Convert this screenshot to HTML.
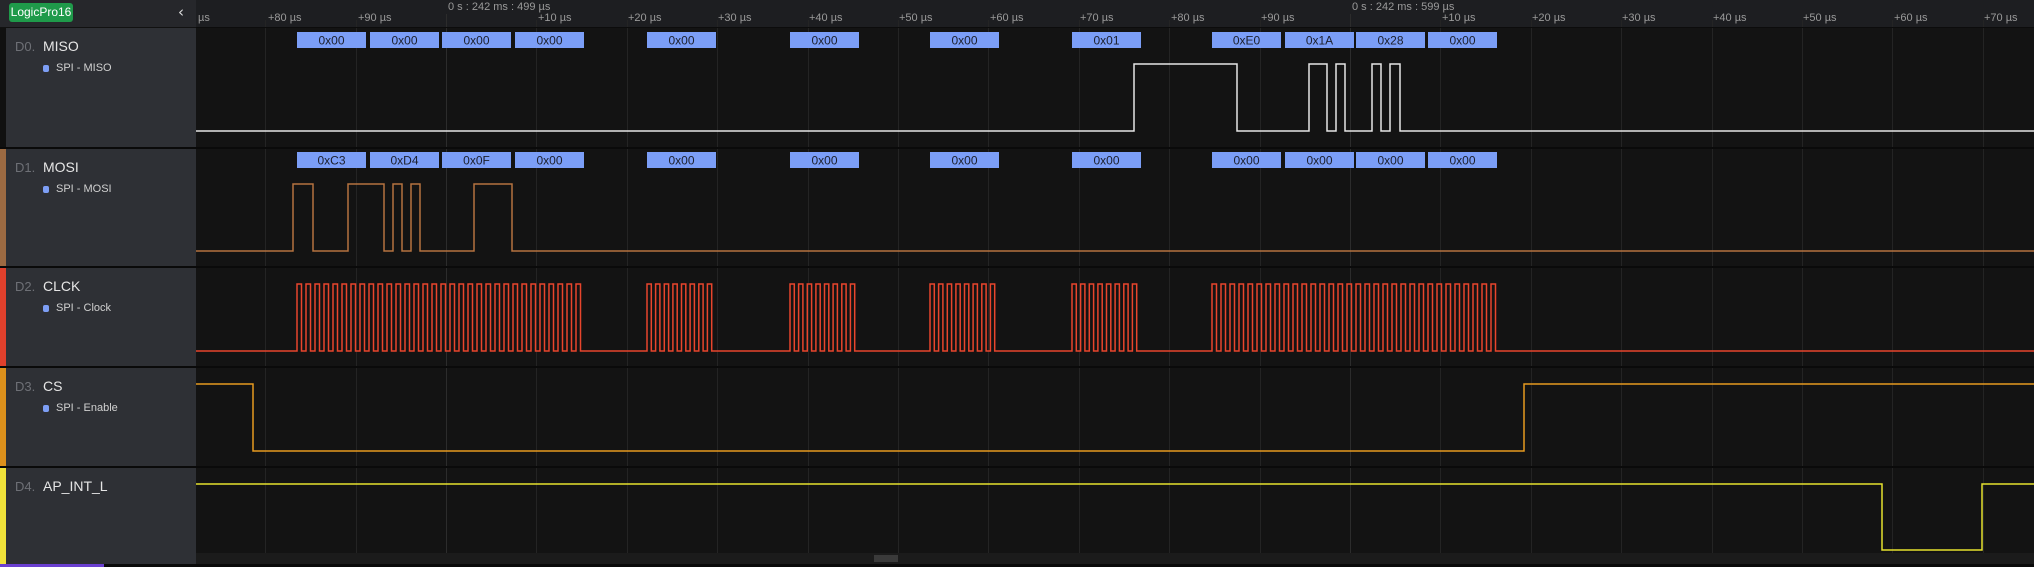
<!DOCTYPE html>
<html><head><meta charset="utf-8">
<style>
html,body{margin:0;padding:0;width:2034px;height:567px;overflow:hidden;background:#131313;font-family:"Liberation Sans Narrow","Liberation Sans",sans-serif;}
#root{position:relative;width:2034px;height:567px;}
.panel{position:absolute;left:0;top:0;width:196px;height:567px;background:#2e3035;}
.hdrL{position:absolute;left:0;top:0;width:196px;height:27px;background:#26272b;border-bottom:1px solid #111;}
.logo{position:absolute;left:9px;top:3px;width:64px;height:19px;background:#1f9a4a;border-radius:3px;color:#fff;font-size:12px;line-height:19px;text-align:center;}
.chev{position:absolute;left:178px;top:3px;color:#ddd;font-size:15px;font-family:"DejaVu Sans",sans-serif;}
.row{position:absolute;left:0;width:196px;}
.strip{position:absolute;left:0;top:0;bottom:0;width:6px;}
.dn{position:absolute;left:15px;top:11px;color:#6e7076;font-size:13px;}
.nm{position:absolute;left:43px;top:10px;color:#e6e6e6;font-size:14px;}
.sub{position:absolute;left:56px;top:34px;color:#d0d0d0;font-size:11px;}
.dot{position:absolute;left:43px;top:37px;width:6px;height:7px;background:#7d9ef5;border-radius:2px;}
.sep{position:absolute;left:0;width:2034px;height:2px;background:#0a0a0a;}
</style></head><body><div id="root">
<svg id="wave" width="2034" height="567" style="position:absolute;left:0;top:0" xmlns="http://www.w3.org/2000/svg">
<rect x="196" y="0" width="1838" height="27" fill="#1d1e21"/>
<rect x="196" y="553" width="1838" height="11" fill="#1b1b1b"/>
<rect x="874" y="555" width="24" height="7" fill="#3a3a3a"/>
<g id="grid"></g>
<g font-size="11" fill="#9a9a9a" id="labels">
<text x="198" y="21">µs</text>
<text x="268" y="21">+80 µs</text>
<text x="358" y="21">+90 µs</text>
<text x="448" y="10">0 s : 242 ms : 499 µs</text>
<text x="538" y="21">+10 µs</text>
<text x="628" y="21">+20 µs</text>
<text x="718" y="21">+30 µs</text>
<text x="809" y="21">+40 µs</text>
<text x="899" y="21">+50 µs</text>
<text x="990" y="21">+60 µs</text>
<text x="1080" y="21">+70 µs</text>
<text x="1171" y="21">+80 µs</text>
<text x="1261" y="21">+90 µs</text>
<text x="1352" y="10">0 s : 242 ms : 599 µs</text>
<text x="1442" y="21">+10 µs</text>
<text x="1532" y="21">+20 µs</text>
<text x="1622" y="21">+30 µs</text>
<text x="1713" y="21">+40 µs</text>
<text x="1803" y="21">+50 µs</text>
<text x="1894" y="21">+60 µs</text>
<text x="1984" y="21">+70 µs</text>
</g>
<path fill="none" stroke="#e6e6e6" stroke-width="1.5" d="M196 131H1134V64H1237V131H1309V64H1327V131H1336V64H1345V131H1372V64H1381V131H1390V64H1400V131H2034"/>
<path fill="none" stroke="#b5733f" stroke-width="1.5" d="M196 251H293V184H313V251H348V184H384V251H393V184H402V251H411V184H420V251H474V184H512V251H2034"/>
<path id="clk" fill="none" stroke="#e8452c" stroke-width="1.5" d=""/>
<path fill="none" stroke="#e69a20" stroke-width="1.5" d="M196 384H253V451H1524V384H2034"/>
<path fill="none" stroke="#e6e22e" stroke-width="1.5" d="M196 484H1882V550H1982V484H2034"/>
<g id="boxes" font-size="12" fill="#1c1f2c" text-anchor="middle"></g>
</svg>
<div class="sep" style="top:27px;background:#0c0c0c;height:1px"></div>
<div class="panel">
<div class="hdrL"><div class="logo">LogicPro16</div><div class="chev">‹</div></div>
<div class="row" style="top:28px;height:119px"><div class="strip" style="background:#101010"></div><div class="dn">D0.</div><div class="nm">MISO</div><div class="dot"></div><div class="sub">SPI - MISO</div></div>
<div class="row" style="top:149px;height:117px"><div class="strip" style="background:#9c6a42"></div><div class="dn">D1.</div><div class="nm">MOSI</div><div class="dot"></div><div class="sub">SPI - MOSI</div></div>
<div class="row" style="top:268px;height:98px"><div class="strip" style="background:#e0402c"></div><div class="dn">D2.</div><div class="nm">CLCK</div><div class="dot"></div><div class="sub">SPI - Clock</div></div>
<div class="row" style="top:368px;height:98px"><div class="strip" style="background:#dc901c"></div><div class="dn">D3.</div><div class="nm">CS</div><div class="dot"></div><div class="sub">SPI - Enable</div></div>
<div class="row" style="top:468px;height:96px"><div class="strip" style="background:#f0e23a"></div><div class="dn">D4.</div><div class="nm">AP_INT_L</div></div>
</div>
<div class="sep" style="top:147px"></div>
<div class="sep" style="top:266px"></div>
<div class="sep" style="top:366px"></div>
<div class="sep" style="top:466px"></div>
<div style="position:absolute;left:0;top:564px;width:2034px;height:3px;background:#0a0a0a"></div>
<div style="position:absolute;left:0;top:564px;width:104px;height:3px;background:#6a3fd0"></div>
<script>
var ns="http://www.w3.org/2000/svg";
var g=document.getElementById('grid');
for(var k=-3;k<=17;k++){var x=Math.round(446+k*90.4)+0.5;if(x<196)continue;
var l=document.createElementNS(ns,'line');l.setAttribute('x1',x);l.setAttribute('x2',x);l.setAttribute('y1',(k%10==0)?14:20);l.setAttribute('y2',553);
l.setAttribute('stroke',(k%10==0)?'#2c2c2c':'#242424');l.setAttribute('stroke-width','1');g.appendChild(l);}
var spans=[[297,585,32],[647,716,8],[790,859,8],[930,999,8],[1072,1141,8],[1212,1500,32]];
var d="M196 351";
spans.forEach(function(s){var p=(s[1]-s[0])/s[2];for(var i=0;i<s[2];i++){var a=s[0]+i*p;d+="H"+a.toFixed(1)+"V284H"+(a+p/2).toFixed(1)+"V351";}});
d+="H2034";document.getElementById('clk').setAttribute('d',d);
var bx=document.getElementById('boxes');
var miso=[[297,"0x00"],[370,"0x00"],[442,"0x00"],[515,"0x00"],[647,"0x00"],[790,"0x00"],[930,"0x00"],[1072,"0x01"],[1212,"0xE0"],[1285,"0x1A"],[1356,"0x28"],[1428,"0x00"]];
var mosi=[[297,"0xC3"],[370,"0xD4"],[442,"0x0F"],[515,"0x00"],[647,"0x00"],[790,"0x00"],[930,"0x00"],[1072,"0x00"],[1212,"0x00"],[1285,"0x00"],[1356,"0x00"],[1428,"0x00"]];
function add(arr,y){arr.forEach(function(b){var r=document.createElementNS(ns,'rect');r.setAttribute('x',b[0]);r.setAttribute('y',y);r.setAttribute('width',69);r.setAttribute('height',16);r.setAttribute('fill','#7b9ef7');bx.appendChild(r);
var t=document.createElementNS(ns,'text');t.setAttribute('x',b[0]+34.5);t.setAttribute('y',y+12.5);t.textContent=b[1];bx.appendChild(t);});}
add(miso,32);add(mosi,152);
</script>
</div></body></html>
